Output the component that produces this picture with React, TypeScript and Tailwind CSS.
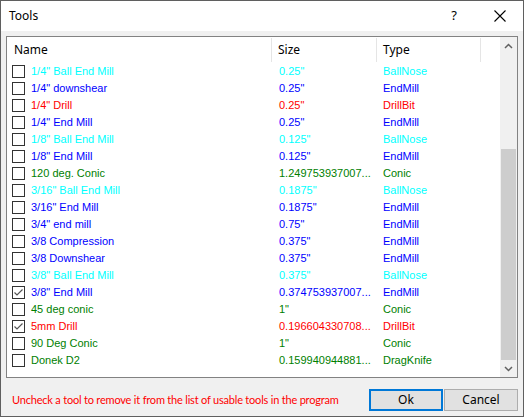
import React from "react";

type Row = { name: string; size: string; type: string; color: string; checked?: boolean };

const C = "text-[#00ffff]";
const B = "text-[#0000ff]";
const R = "text-[#ff0000]";
const G = "text-[#008000]";

const rows: Row[] = [
  { name: '1/4" Ball End Mill', size: '0.25"', type: "BallNose", color: C },
  { name: '1/4" downshear', size: '0.25"', type: "EndMill", color: B },
  { name: '1/4" Drill', size: '0.25"', type: "DrillBit", color: R },
  { name: '1/4" End Mill', size: '0.25"', type: "EndMill", color: B },
  { name: '1/8" Ball End Mill', size: '0.125"', type: "BallNose", color: C },
  { name: '1/8" End Mill', size: '0.125"', type: "EndMill", color: B },
  { name: "120 deg. Conic", size: "1.249753937007...", type: "Conic", color: G },
  { name: '3/16" Ball End Mill', size: '0.1875"', type: "BallNose", color: C },
  { name: '3/16" End Mill', size: '0.1875"', type: "EndMill", color: B },
  { name: '3/4" end mill', size: '0.75"', type: "EndMill", color: B },
  { name: "3/8 Compression", size: '0.375"', type: "EndMill", color: B },
  { name: "3/8 Downshear", size: '0.375"', type: "EndMill", color: B },
  { name: '3/8" Ball End Mill', size: '0.375"', type: "BallNose", color: C },
  { name: '3/8" End Mill', size: "0.374753937007...", type: "EndMill", color: B, checked: true },
  { name: "45 deg conic", size: '1"', type: "Conic", color: G },
  { name: "5mm Drill", size: "0.196604330708...", type: "DrillBit", color: R, checked: true },
  { name: "90 Deg Conic", size: '1"', type: "Conic", color: G },
  { name: "Donek D2", size: "0.159940944881...", type: "DragKnife", color: G },
];

function Check({ checked }: { checked?: boolean }) {
  return (
    <div className="w-[13px] h-[13px] border border-[#333333] bg-white flex items-center justify-center shrink-0">
      {checked && (
        <svg width="11" height="11" viewBox="0 0 11 11">
          <path d="M1.5 5.5 L4 8 L9.5 2.5" fill="none" stroke="#555" strokeWidth="1.2" />
        </svg>
      )}
    </div>
  );
}

export default function App() {
  const ui = { fontFamily: '"Noto Sans", "Open Sans", sans-serif' };
  const list = { fontFamily: '"Liberation Sans", Arial, sans-serif' };
  const msg = { fontFamily: 'Lato, "Noto Sans", sans-serif' };
  return (
    <div className="w-[524px] h-[417px] border border-[#5f5f5f] bg-[#f0f0f0] flex flex-col overflow-hidden" style={ui}>
      <div className="h-[30px] bg-white flex items-center shrink-0">
        <div className="pl-[8px] text-[12px] text-black flex-1">Tools</div>
        <div className="w-[46px] h-[30px] flex items-center justify-center text-[13px] text-black">?</div>
        <div className="w-[46px] h-[30px] flex items-center justify-center">
          <svg width="12" height="12" viewBox="0 0 12 12">
            <path d="M0.5 0.5 L11.5 11.5 M11.5 0.5 L0.5 11.5" stroke="#000" strokeWidth="1.1" />
          </svg>
        </div>
      </div>
      <div className="flex-1 flex flex-col px-[5px] pt-[5px]">
        <div className="h-[342px] border border-[#828282] bg-white flex">
          <div className="flex-1 flex flex-col">
            <div className="h-[26px] flex text-[12px] text-black shrink-0">
              <div className="w-[265px] pl-[7px] flex items-center border-r border-[#e5e5e5] my-[1px]">Name</div>
              <div className="w-[105px] pl-[6px] flex items-center border-r border-[#e5e5e5] my-[1px]">Size</div>
              <div className="w-[104px] pl-[6px] flex items-center border-r border-[#e5e5e5] my-[1px]">Type</div>
              <div className="flex-1" />
            </div>
            <div className="flex flex-col text-[11px]" style={list}>
              {rows.map((r, i) => (
                <div key={i} className={`h-[17px] flex items-center ${r.color}`}>
                  <div className="w-[265px] flex items-center pl-[5px] gap-[6px]">
                    <Check checked={r.checked} />
                    <span className="leading-none">{r.name}</span>
                  </div>
                  <div className="w-[105px] pl-[7px] leading-none">{r.size}</div>
                  <div className="w-[104px] pl-[6px] leading-none">{r.type}</div>
                </div>
              ))}
            </div>
          </div>
          <div className="w-[17px] bg-[#f0f0f0] flex flex-col shrink-0">
            <div className="h-[17px] flex items-center justify-center">
              <svg width="9" height="6" viewBox="0 0 9 6">
                <path d="M1 5 L4.5 1.5 L8 5" fill="none" stroke="#606060" strokeWidth="1.5" />
              </svg>
            </div>
            <div className="flex-1 flex flex-col px-[1px]">
              <div className="h-[95px]" />
              <div className="flex-1 bg-[#cdcdcd]" />
            </div>
            <div className="h-[17px] flex items-center justify-center">
              <svg width="9" height="6" viewBox="0 0 9 6">
                <path d="M1 1 L4.5 4.5 L8 1" fill="none" stroke="#606060" strokeWidth="1.5" />
              </svg>
            </div>
          </div>
        </div>
        <div className="flex items-center mt-[11px]">
          <div className="flex-1 min-w-0 pl-[6px] text-[11px] tracking-[-0.2px] text-[#ff0000] whitespace-nowrap" style={msg}>
            Uncheck a tool to remove it from the list of usable tools in the program
          </div>
          <button className="shrink-0 w-[74px] h-[22px] border-2 border-[#0078d7] bg-[#e1e1e1] text-[12px] text-black flex items-center justify-center">
            Ok
          </button>
          <button className="shrink-0 ml-[1px] w-[74px] h-[22px] border border-[#adadad] bg-[#e1e1e1] text-[12px] text-black flex items-center justify-center">
            Cancel
          </button>
        </div>
      </div>
    </div>
  );
}
